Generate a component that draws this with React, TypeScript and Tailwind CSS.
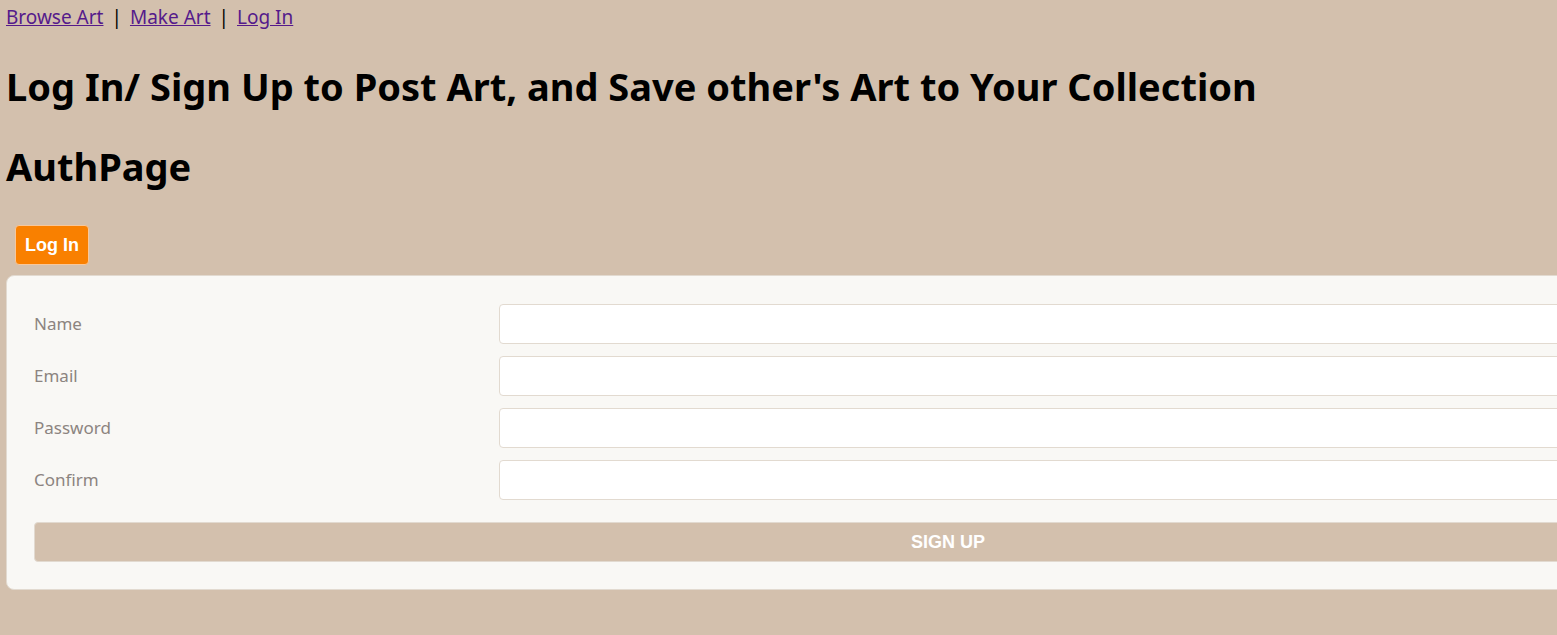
export default function App() {
  const fields = ["Name", "Email", "Password", "Confirm"];

  return (
    <div className="min-h-[635px] w-full overflow-hidden bg-[#d3c0ad] px-[6px] font-['Noto_Sans',sans-serif] text-black">
      <nav className="pt-[4px] text-[19px] leading-[26px]">
        <a href="#" className="text-[#551a8b] underline">Browse Art</a>
        <span className="mx-[8px]">|</span>
        <a href="#" className="text-[#551a8b] underline">Make Art</a>
        <span className="mx-[8px]">|</span>
        <a href="#" className="text-[#551a8b] underline">Log In</a>
      </nav>

      <h1 className="mt-[30px] text-[38px] font-bold leading-[52px]">
        Log In/ Sign Up to Post Art, and Save other's Art to Your Collection
      </h1>
      <h1 className="mt-[28px] text-[38px] font-bold leading-[52px]">AuthPage</h1>

      <div className="mt-[33px] pl-[9px]">
        <button className="h-[40px] rounded-[4px] border border-[#f8c79a] bg-[#f98000] px-[9px] font-['Liberation_Sans',sans-serif] text-[18px] font-bold text-white">
          Log In
        </button>
      </div>

      <div className="mt-[10px] w-[1884px] rounded-[8px] border border-[#e2dad0] bg-[#f9f8f5] px-[27px] pb-[27px] pt-[28px]">
        <form className="flex flex-col gap-[12px]">
          {fields.map((f) => (
            <div key={f} className="grid grid-cols-[465px_1fr] items-center">
              <label className="text-[17px] text-[#8c8480]">{f}</label>
              <input
                type={f === "Password" || f === "Confirm" ? "password" : "text"}
                className="h-[40px] rounded-[4px] border border-[#e2dad0] bg-white"
              />
            </div>
          ))}
          <button
            type="button"
            className="mt-[10px] h-[40px] rounded-[4px] border border-[#e2dad0] bg-[#d3c0ad] font-['Liberation_Sans',sans-serif] text-[18px] font-bold text-white"
          >
            SIGN UP
          </button>
        </form>
      </div>
    </div>
  );
}
